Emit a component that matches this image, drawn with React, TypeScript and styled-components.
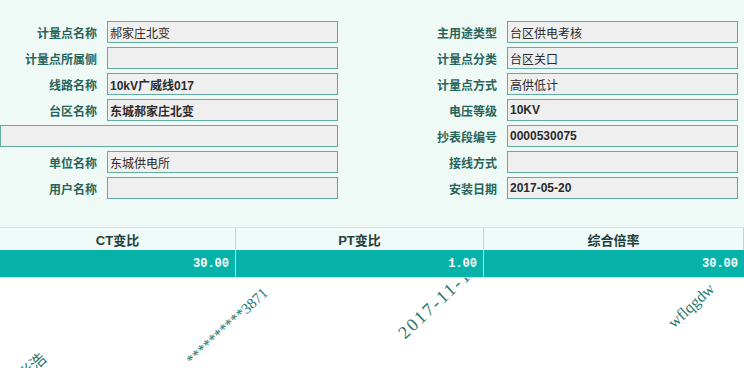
import React from "react";
import styled, { createGlobalStyle } from "styled-components";

const GlobalStyle = createGlobalStyle`
  html, body {
    margin: 0;
    padding: 0;
    background: #ffffff;
  }
  body {
    font-family: "Liberation Sans", "Noto Sans CJK SC", sans-serif;
    font-size: 12px;
  }
`;

const Page = styled.div`
  width: 744px;
  height: 368px;
  overflow: hidden;
  background: #ffffff;
`;

const FormArea = styled.div`
  background: #effaf7;
  height: 227px;
  box-sizing: border-box;
  padding-top: 21px;
`;

const FormGrid = styled.div`
  display: grid;
  grid-template-columns: 97px 231px 149px 231px;
  grid-auto-rows: 22px;
  column-gap: 10px;
  row-gap: 4px;
`;

const Label = styled.div<{ $col: number }>`
  grid-column: ${(p) => p.$col};
  display: flex;
  align-items: center;
  justify-content: flex-end;
  color: #27655b;
  font-weight: bold;
  font-size: 12px;
  white-space: nowrap;
`;

const Field = styled.div<{ $bold?: boolean; $span?: string }>`
  ${(p) => (p.$span ? `grid-column: ${p.$span};` : "")}
  box-sizing: border-box;
  height: 22px;
  background: #efefef;
  border: 1px solid #62aca2;
  display: flex;
  align-items: center;
  padding-left: 2px;
  color: #2b2b2b;
  font-weight: ${(p) => (p.$bold ? "bold" : "normal")};
  font-size: 12px;
  white-space: nowrap;
`;

const Section = styled.div`
  position: relative;
  height: 141px;
`;

const Watermarks = styled.div`
  position: absolute;
  inset: 0;
  z-index: 0;
  overflow: hidden;
  pointer-events: none;
`;

const Mark = styled.span<{ $size: number; $spacing: number }>`
  position: absolute;
  transform-origin: 0 100%;
  transform: rotate(-43deg);
  font-family: "Liberation Serif", "Noto Sans CJK SC", serif;
  font-size: ${(p) => p.$size}px;
  line-height: ${(p) => p.$size}px;
  letter-spacing: ${(p) => p.$spacing}px;
  color: #23786e;
  white-space: nowrap;
`;

const Table = styled.div`
  position: relative;
  z-index: 1;
  display: grid;
  grid-template-columns: 236px 248px 260px;
  border-top: 1px solid #d6e3e0;
`;

const HeadCell = styled.div`
  height: 22px;
  background: #f0faf8;
  border-right: 1px solid #c6d6d3;
  display: flex;
  align-items: center;
  justify-content: center;
  font-weight: bold;
  font-size: 13px;
  color: #24403c;
  &:last-child {
    border-right: none;
  }
`;

const ValueCell = styled.div`
  height: 27px;
  background: #07b3a8;
  border-right: 1px solid #b5e3de;
  border-bottom: 1px solid #bfe6e2;
  display: flex;
  align-items: center;
  justify-content: flex-end;
  padding-right: 6px;
  color: #ffffff;
  font-family: "Liberation Mono", monospace;
  font-weight: bold;
  font-size: 12px;
  &:last-child {
    border-right: none;
  }
`;

type Item = { label?: string; value: string; bold?: boolean; span?: string };

const leftItems: Item[] = [
  { label: "计量点名称", value: "郝家庄北变" },
  { label: "计量点所属侧", value: "" },
  { label: "线路名称", value: "10kV广威线017", bold: true },
  { label: "台区名称", value: "东城郝家庄北变", bold: true },
  { value: "", span: "1 / 3" },
  { label: "单位名称", value: "东城供电所" },
  { label: "用户名称", value: "" },
];

const rightItems: Item[] = [
  { label: "主用途类型", value: "台区供电考核" },
  { label: "计量点分类", value: "台区关口" },
  { label: "计量点方式", value: "高供低计" },
  { label: "电压等级", value: "10KV", bold: true },
  { label: "抄表段编号", value: "0000530075", bold: true },
  { label: "接线方式", value: "" },
  { label: "安装日期", value: "2017-05-20", bold: true },
];

const ratios = [
  { title: "CT变比", value: "30.00" },
  { title: "PT变比", value: "1.00" },
  { title: "综合倍率", value: "30.00" },
];

// watermark positions, relative to the table section
const marks = [
  { text: "张浩", left: 26, top: 141, size: 16, spacing: 0 },
  { text: "**********3871", left: 194, top: 126, size: 15, spacing: 0 },
  { text: "2017-11-18", left: 407, top: 97, size: 18, spacing: 2 },
  { text: "wflqgdw", left: 676, top: 88, size: 16, spacing: 0 },
];

const App = () => {
  return (
    <Page>
      <GlobalStyle />
      <FormArea>
        <FormGrid>
          {leftItems.map((l, i) => {
            const r = rightItems[i];
            return (
              <React.Fragment key={i}>
                {l.label !== undefined && <Label $col={1}>{l.label}</Label>}
                <Field $bold={l.bold} $span={l.span || "2"}>
                  {l.value}
                </Field>
                <Label $col={3}>{r.label}</Label>
                <Field $bold={r.bold} $span="4">
                  {r.value}
                </Field>
              </React.Fragment>
            );
          })}
        </FormGrid>
      </FormArea>
      <Section>
        <Watermarks>
          {marks.map((m) => (
            <Mark
              key={m.text}
              $size={m.size}
              $spacing={m.spacing}
              style={{ left: m.left, top: m.top }}
            >
              {m.text}
            </Mark>
          ))}
        </Watermarks>
        <Table>
          {ratios.map((r) => (
            <HeadCell key={r.title}>{r.title}</HeadCell>
          ))}
          {ratios.map((r) => (
            <ValueCell key={r.title}>{r.value}</ValueCell>
          ))}
        </Table>
      </Section>
    </Page>
  );
};

export default App;
